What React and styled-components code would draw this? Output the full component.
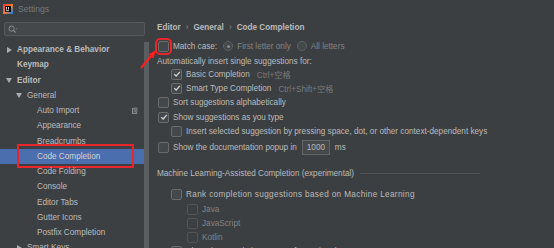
import React from 'react';
import styled, { createGlobalStyle } from 'styled-components';

const FONT = '"Liberation Sans", "Noto Sans CJK SC", sans-serif';

const GlobalStyle = createGlobalStyle`
  html, body {
    margin: 0;
    padding: 0;
    background: #3c3f41;
  }
  body {
    width: 554px;
    height: 248px;
    overflow: hidden;
    font-family: ${FONT};
    font-size: 8.2px;
    color: #bbbbbb;
  }
`;

const treeItems = [
  { label: 'Appearance & Behavior', level: 0, arrow: 'right', bold: true },
  { label: 'Keymap', level: 0, bold: true },
  { label: 'Editor', level: 0, arrow: 'down', bold: true },
  { label: 'General', level: 1, arrow: 'down' },
  { label: 'Auto Import', level: 2, badge: true },
  { label: 'Appearance', level: 2 },
  { label: 'Breadcrumbs', level: 2 },
  { label: 'Code Completion', level: 2, selected: true },
  { label: 'Code Folding', level: 2 },
  { label: 'Console', level: 2 },
  { label: 'Editor Tabs', level: 2 },
  { label: 'Gutter Icons', level: 2 },
  { label: 'Postfix Completion', level: 2 },
  { label: 'Smart Keys', level: 1, arrow: 'right' },
];

function Arrow({ dir }) {
  return (
    <svg width="6" height="6" viewBox="0 0 6 6">
      {dir === 'right' ? (
        <path d="M1 0 L6 3 L1 6 Z" fill="#a9abad" />
      ) : (
        <path d="M0 1 L6 1 L3 6 Z" fill="#a9abad" />
      )}
    </svg>
  );
}

function AppLogo() {
  return (
    <svg width="10" height="10" viewBox="0 0 10 10">
      <defs>
        <linearGradient id="lg" x1="0" y1="0" x2="1" y2="1">
          <stop offset="0" stopColor="#fe2857" />
          <stop offset="0.5" stopColor="#fc801d" />
          <stop offset="1" stopColor="#087cfa" />
        </linearGradient>
      </defs>
      <rect width="10" height="10" fill="url(#lg)" />
      <rect x="2" y="2" width="6" height="6" fill="#000" />
      <rect x="3" y="6.4" width="3" height="0.8" fill="#fff" />
      <rect x="3" y="3" width="0.8" height="2.6" fill="#fff" />
      <rect x="5" y="3" width="0.8" height="2.6" fill="#fff" />
    </svg>
  );
}

function CheckBox({ checked, disabled, marked }) {
  return (
    <Box $disabled={disabled} $marked={marked}>
      {checked && (
        <svg width="8" height="8" viewBox="0 0 8 8">
          <path d="M1.3 4.2 L3.2 6 L6.8 1.8" stroke="#d0d0d0" strokeWidth="1.3" fill="none" />
        </svg>
      )}
    </Box>
  );
}

function Radio({ selected }) {
  return <RadioDot $selected={selected} />;
}

function App() {
  return (
    <Window>
      <GlobalStyle />
      <TitleBar>
        <AppLogo />
        <Title>Settings</Title>
      </TitleBar>
      <Main>
        <Sidebar>
          <Search>
            <svg width="10" height="9" viewBox="0 0 10 9">
              <circle cx="3.6" cy="3.6" r="2.6" stroke="#8c8e90" strokeWidth="1" fill="none" />
              <path d="M5.5 5.5 L7.5 7.5" stroke="#8c8e90" strokeWidth="1.1" />
              <path d="M7.6 3.6 L9.6 3.6 L8.6 4.6 Z" fill="#8c8e90" />
            </svg>
          </Search>
          <TreeArea>
            <Tree>
              {treeItems.map((item) => (
                <TreeRow key={item.label} $level={item.level} $selected={item.selected}>
                  <ArrowSlot>{item.arrow && <Arrow dir={item.arrow} />}</ArrowSlot>
                  <TreeLabel $bold={item.bold}>{item.label}</TreeLabel>
                  {item.badge && (
                    <Badge>
                      <svg width="6" height="7" viewBox="0 0 6 7">
                        <rect x="0.5" y="1.5" width="4" height="5" fill="none" stroke="#8a8c8e" />
                        <rect x="1.5" y="0.5" width="4" height="5" fill="#6e7072" />
                      </svg>
                    </Badge>
                  )}
                  {item.selected && <Highlight />}
                </TreeRow>
              ))}
            </Tree>
            <Scrollbar />
          </TreeArea>
        </Sidebar>
        <Content>
          <Crumbs>
            <span>Editor</span>
            <Sep>›</Sep>
            <span>General</span>
            <Sep>›</Sep>
            <span>Code Completion</span>
          </Crumbs>
          <Row $mt={5}>
            <CheckBox marked />
            <Text>Match case:</Text>
            <Radio selected />
            <Muted>First letter only</Muted>
            <Radio />
            <Muted>All letters</Muted>
          </Row>
          <Row $mt={1}>
            <Text>Automatically insert single suggestions for:</Text>
          </Row>
          <Row $mt={-1} $indent={13}>
            <CheckBox checked />
            <Text>Basic Completion</Text>
            <Hint>Ctrl+空格</Hint>
          </Row>
          <Row $mt={0} $indent={13}>
            <CheckBox checked />
            <Text>Smart Type Completion</Text>
            <Hint>Ctrl+Shift+空格</Hint>
          </Row>
          <Row $mt={0}>
            <CheckBox />
            <Text>Sort suggestions alphabetically</Text>
          </Row>
          <Row $mt={1}>
            <CheckBox checked />
            <Text>Show suggestions as you type</Text>
          </Row>
          <Row $mt={0} $indent={13}>
            <CheckBox />
            <Text>Insert selected suggestion by pressing space, dot, or other context-dependent keys</Text>
          </Row>
          <Row $mt={1} $height={16}>
            <CheckBox />
            <Text>Show the documentation popup in</Text>
            <NumberField>1000</NumberField>
            <Text>ms</Text>
          </Row>
          <Section $mt={11}>
            <Text>Machine Learning-Assisted Completion (experimental)</Text>
            <Rule />
          </Section>
          <Row $mt={7} $indent={13}>
            <CheckBox />
            <Text $wide>Rank completion suggestions based on Machine Learning</Text>
          </Row>
          <Row $mt={1} $indent={29}>
            <CheckBox disabled />
            <Muted>Java</Muted>
          </Row>
          <Row $mt={0} $indent={29}>
            <CheckBox disabled />
            <Muted>JavaScript</Muted>
          </Row>
          <Row $mt={0} $indent={29}>
            <CheckBox disabled />
            <Muted>Kotlin</Muted>
          </Row>
          <Row $mt={0} $indent={13}>
            <CheckBox />
            <Text>Show the completion popup after typing dot</Text>
          </Row>
        </Content>
      </Main>
      <Pointer width="20" height="22" viewBox="0 0 20 22">
        <path d="M2 20 L13 7" stroke="#ff1f1f" strokeWidth="2" />
        <path d="M17 2 L9.5 6.5 L14.5 10.5 Z" fill="#ff1f1f" />
      </Pointer>
    </Window>
  );
}

export default App;

const Window = styled.div`
  position: relative;
  width: 554px;
  height: 248px;
  display: flex;
  flex-direction: column;
  background: #3c3f41;
  overflow: hidden;
`;

const TitleBar = styled.div`
  height: 18px;
  display: flex;
  align-items: center;
  gap: 5px;
  padding-left: 3px;
  flex-shrink: 0;
`;

const Title = styled.span`
  color: #75787b;
  font-size: 8.6px;
`;

const Main = styled.div`
  flex: 1;
  display: flex;
  min-height: 0;
`;

const Sidebar = styled.div`
  width: 150px;
  flex-shrink: 0;
  display: flex;
  flex-direction: column;
  background: #3d4043;
`;

const Search = styled.div`
  margin: 4px 5px 0 4px;
  height: 12px;
  flex-shrink: 0;
  border: 1px solid #55585a;
  background: #45484a;
  border-radius: 2px;
  display: flex;
  align-items: center;
  padding-left: 3px;
`;

const TreeArea = styled.div`
  flex: 1;
  display: flex;
  margin-top: 6px;
  min-height: 0;
`;

const Tree = styled.div`
  flex: 1;
  display: flex;
  flex-direction: column;
`;

const TreeRow = styled.div`
  position: relative;
  height: 15.25px;
  flex-shrink: 0;
  display: flex;
  align-items: center;
  padding-left: ${(p) => 6 + p.$level * 10}px;
  background: ${(p) => (p.$selected ? '#4b6eaf' : 'transparent')};
  color: ${(p) => (p.$selected ? '#d4d4d4' : '#bbbbbb')};
`;

const ArrowSlot = styled.span`
  width: 11px;
  display: flex;
  align-items: center;
`;

const TreeLabel = styled.span`
  font-weight: ${(p) => (p.$bold ? 700 : 400)};
  white-space: nowrap;
`;

const Badge = styled.span`
  margin-left: auto;
  margin-right: 6px;
  display: flex;
`;

const Highlight = styled.span`
  position: absolute;
  left: 17px;
  top: -5px;
  width: 113px;
  height: 20px;
  border: 2px solid #e8262b;
  pointer-events: none;
`;

const Scrollbar = styled.div`
  width: 5px;
  margin-right: 1px;
  background: #5b5e61;
`;

const Content = styled.div`
  flex: 1;
  display: flex;
  flex-direction: column;
  padding-left: 7px;
  min-height: 0;
`;

const Crumbs = styled.div`
  height: 14px;
  margin-top: 2px;
  flex-shrink: 0;
  display: flex;
  align-items: center;
  gap: 5px;
  font-weight: 700;
`;

const Sep = styled.span`
  font-weight: 400;
  color: #8c8e90;
`;

const Row = styled.div`
  height: ${(p) => p.$height || 14}px;
  margin-top: ${(p) => p.$mt}px;
  padding-left: ${(p) => p.$indent || 0}px;
  display: flex;
  align-items: center;
  white-space: nowrap;
  flex-shrink: 0;
`;

const Section = styled(Row)`
  gap: 6px;
  padding-right: 74px;
`;

const Rule = styled.div`
  flex: 1;
  height: 1px;
  background: #4f5254;
`;

const Box = styled.span`
  width: 9px;
  height: 9px;
  margin-left: 1px;
  margin-right: 4px;
  border: 1px solid ${(p) => (p.$disabled ? '#515355' : '#6b6b6b')};
  background: ${(p) => (p.$disabled ? '#3c3f41' : '#43494a')};
  border-radius: 2px;
  display: flex;
  align-items: center;
  justify-content: center;
  flex-shrink: 0;
  outline: ${(p) => (p.$marked ? '2px solid #e8262b' : 'none')};
  outline-offset: 1px;
`;

const RadioDot = styled.span`
  width: 8px;
  height: 8px;
  margin: 0 4px 0 6px;
  border-radius: 50%;
  border: 1px solid #5e6163;
  background: #43494a;
  display: flex;
  align-items: center;
  justify-content: center;
  flex-shrink: 0;
  &::after {
    content: '';
    width: 3px;
    height: 3px;
    border-radius: 50%;
    background: ${(p) => (p.$selected ? '#8a8c8e' : 'transparent')};
  }
`;

const Text = styled.span`
  color: #bbbbbb;
  letter-spacing: ${(p) => (p.$wide ? '0.35px' : 'normal')};
`;

const Muted = styled.span`
  color: #808284;
`;

const Hint = styled.span`
  color: #78797b;
  margin-left: 7px;
`;

const NumberField = styled.span`
  width: 22px;
  height: 13px;
  margin: 0 5px 0 5px;
  padding-left: 4px;
  border: 1px solid #646464;
  background: #45494a;
  display: flex;
  align-items: center;
  color: #bbbbbb;
`;

const Pointer = styled.svg`
  position: absolute;
  left: 139px;
  top: 48px;
  pointer-events: none;
`;
